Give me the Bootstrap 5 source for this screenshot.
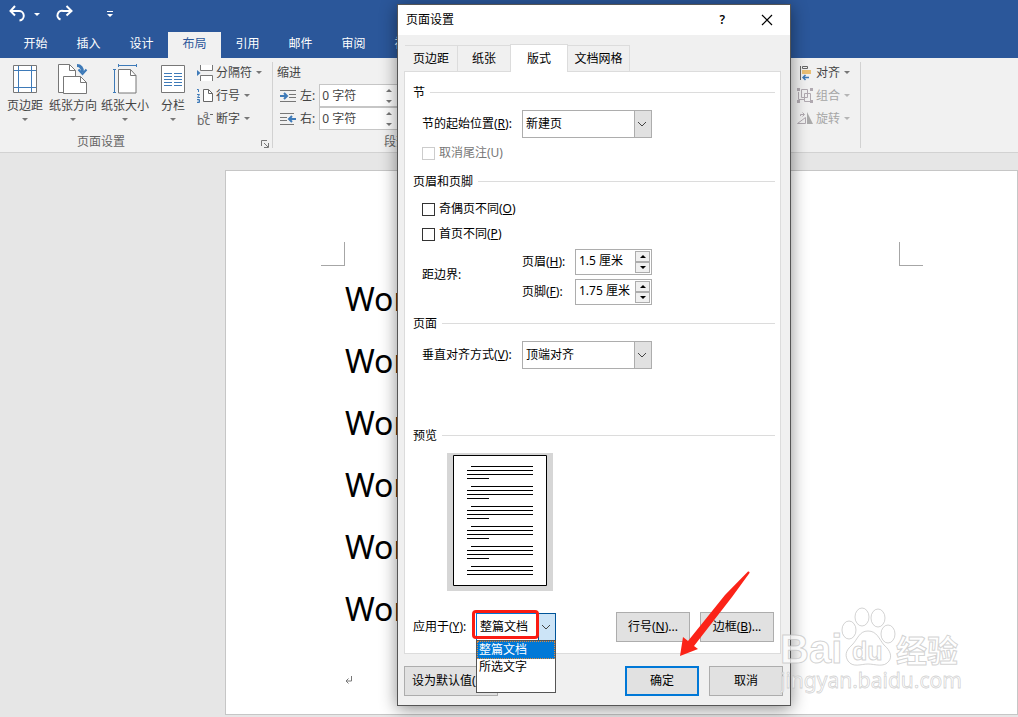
<!DOCTYPE html>
<html lang="zh-CN">
<head>
<meta charset="utf-8">
<meta name="viewport" content="width=device-width, initial-scale=1">
<title>页面设置</title>
<link href="https://cdn.jsdelivr.net/npm/bootstrap@5.3.0/dist/css/bootstrap.min.css" rel="stylesheet">
<style>
  :root { --word-blue: #2b579a; --ink: #444; --line: #d2d2d2; --face: #f0f0f0; --edge: #adadad; }
  body { font: 12px/16px "Noto Sans", "Noto Sans CJK SC", sans-serif; color: #000; background: #e6e6e6; }
  button, input, select { font: inherit; color: inherit; border-radius: 0; }
  svg { display: block; flex: none; }
  .plain-btn { border: 0; background: none; padding: 0; white-space: nowrap; }

  /* application window */
  .app-head { background: var(--word-blue); color: #fff; }
  .quick-bar { height: 32px; padding: 0 8px 4px; }
  .quick-bar .caret { border-top-color: #fff; }
  .menu-tabs { padding-left: 9px; height: 26px; }
  .menu-tabs a { width: 53px; line-height: 24px; text-align: center; color: #fff; text-decoration: none; }
  .menu-tabs a.current { background: #f1f1f1; color: var(--word-blue); }
  .ribbon { background: #f1f1f1; color: var(--ink); height: 95px; border-bottom: 1px solid var(--line); }
  .ribbon-group { padding: 3px 0 0; position: relative; }
  .group-setup::after, .group-arrange::after { content: ""; position: absolute; right: 0; top: 4px; bottom: 4px; width: 1px; background: var(--line); }
  .group-setup { width: 273px; padding-left: 1px; }
  .group-para { width: 520px; padding-left: 4px; }
  .group-arrange { width: 68px; padding-left: 4px; }
  .group-name { line-height: 24px; color: #666; }
  .setup-name { padding: 0 4px 0 76px; }
  .para-name { padding-left: 107px; }
  .tool-body { height: 69px; }
  .big-tool { width: 48px; padding-top: 3px; }
  .small-tool { height: 23px; gap: 3px; }
  .small-tool:disabled { color: #a6a6a6; }
  .caret { width: 0; height: 0; border: 3px solid transparent; border-top-color: #777; border-bottom: 0; }
  .small-tool .caret { margin-left: 1px; }
  .small-tool:disabled .caret { border-top-color: #b5b5b5; }
  .indent-row { height: 23px; padding-left: 3px; gap: 4px; }
  .indent-box { width: 80px; height: 23px; border: 1px solid #c6c6c6; background: #fff; }
  .indent-box input { width: 66px; border: 0; padding: 0 2px; background: none; }
  .indent-box .tri-up, .indent-box .tri-down { color: #777; }

  /* document */
  .paper { margin: 17px 0 2px 225px; background: #fff; border: 1px solid #c6c6c6; padding-top: 71px; }
  .crop-marks { padding: 0 94px 0 95px; }
  .crop-marks i { width: 24px; height: 24px; border-bottom: 1px solid #a6a6a6; }
  .crop-marks i:first-child { border-right: 1px solid #a6a6a6; }
  .crop-marks i:last-child { border-left: 1px solid #a6a6a6; }
  .doc-text { padding: 2px 119px 0; font-size: 32px; line-height: 62px; }
  .doc-text p { margin: 0; }
  .para-end { margin-top: 35px; }

  /* dialog window */
  .dialog-win { position: absolute; left: 397px; top: 4px; width: 394px; background: var(--face); border: 1px solid #555; box-shadow: 0 3px 16px rgba(0,0,0,.45); }
  .dialog-title { background: #fff; height: 30px; padding: 0 17px 0 8px; }
  .help-btn { font-weight: 600; margin-right: 36px; }
  .dialog-main { padding: 9px 7px 9px 6px; }
  .page-tabs { padding-left: 1px; }
  .page-tabs button { height: 26px; border: 1px solid #dcdcdc; border-bottom: 0; border-left: 0; background: var(--face); padding: 0; width: 53px; }
  .page-tabs button.current { height: 28px; margin-bottom: -1px; width: 58px; border-left: 1px solid #dcdcdc; margin-left: -1px; background: #fff; position: relative; }
  .page-tabs button.wide { width: 62px; }
  .sheet { background: #fff; border: 1px solid #dcdcdc; padding: 12px 5px 11px 8px; margin-right: 2px; }
  .legend-row { gap: 5px; height: 16px; margin-top: 10px; }
  .legend-row:first-child { margin-top: 0; }
  .legend-row::after { content: ""; flex: 1; height: 1px; background: #dcdcdc; }
  .legend-row h2 { font: inherit; line-height: 18px; margin: 0; padding-top: 2px; }
  .legend-row.after-tick { margin-top: 12px; }
  .legend-row.after-blank { margin-top: 58px; }
  .inset-row { padding-left: 9px; margin-top: 10px; }
  .inset-row.tight { margin-top: 7px; }
  .inset-row.first-tick { margin-top: 12px; }
  .inset-row.next-tick { margin-top: 9px; }
  .field-label { width: 100px; white-space: nowrap; }
  .short-label { width: 53px; white-space: nowrap; }
  .combo { position: relative; width: 130px; height: 28px; }
  .combo select { appearance: none; width: 100%; height: 100%; border: 1px solid var(--edge); background: #fff; padding: 0 3px; color: #000; }
  .combo .drop { position: absolute; right: 0; top: 0; width: 18px; height: 100%; border: 1px solid var(--edge); background: #e1e1e1; pointer-events: none; }
  .tick { gap: 4px; height: 16px; }
  .tick input { appearance: none; width: 13px; height: 13px; border: 1px solid #333; background: #fff; margin: 0; }
  .tick input:disabled { border-color: #ccc; }
  .tick.off { color: #777; }
  .spin { width: 77px; height: 26px; border: 1px solid var(--edge); background: #fff; padding: 1px; }
  .spin input { width: 58px; border: 0; padding: 0 2px 2px; }
  .spin button { width: 15px; height: 11px; border: 1px solid var(--edge); background: var(--face); padding: 0; }
  .tri-up, .tri-down { width: 0; height: 0; border: 3px solid transparent; }
  .tri-up { border-top: 0; border-bottom-color: currentColor; }
  .tri-down { border-bottom: 0; border-top-color: currentColor; }
  .preview-box { width: 106px; height: 138px; margin: 10px 0 21px 34px; background: #d6d6d6; padding: 2px 6px; }
  .push { width: 74px; height: 30px; border: 1px solid var(--edge); background: #e1e1e1; padding: 0; white-space: nowrap; }
  .push + .push { margin-left: 10px; }
  .push.primary { border: 2px solid #0078d7; }
  .push.default-set { width: 94px; overflow: hidden; text-align: left; padding-left: 7px; }
  .apply-label { width: 63px; }
  .apply-actions { padding-right: 1px; }
  .apply-combo { position: relative; width: 80px; height: 28px; }
  .apply-combo select { appearance: none; width: 100%; height: 100%; border: 1px solid #0078d7; background: #fff; padding: 0 3px; color: #000; }
  .apply-combo .drop { position: absolute; right: 0; top: 0; width: 18px; height: 100%; border: 1px solid #005499; background: #cce4f7; pointer-events: none; }
  .apply-list { position: absolute; z-index: 2; left: 0; top: 27px; width: 80px; height: 53px; border: 1px solid #555; background: #fff; padding: 0; margin: 0; list-style: none; }
  .apply-list li { line-height: 16px; padding-left: 2px; }
  .apply-list li.chosen { background: #0078d7; color: #fff; outline: 1px dotted #e08a3c; outline-offset: -1px; line-height: 18px; }
  .red-frame { position: absolute; z-index: 3; left: -4px; top: -3px; width: 67px; height: 29px; border: 3px solid #fb1b12; border-radius: 4px; }
  .red-arrow { position: absolute; z-index: 4; left: 281px; top: 565px; }
  .dialog-foot { margin-top: 12px; }
  .watermark { position: absolute; z-index: 5; right: 48px; bottom: 19px; pointer-events: none; }
</style>
</head>
<body class="position-relative min-vh-100 d-flex flex-column overflow-hidden">
<header class="app-head">
  <div class="quick-bar d-flex align-items-center">
    <button class="plain-btn" aria-label="撤消"><svg width="18" height="18" viewBox="0 0 18 18" fill="none" stroke="#fff" stroke-width="2"><path d="M3 6h7.500a4 4 0 0 1 1 9.500"/><path d="M7 1 2.500 6 7 10.500"/></svg></button>
    <span class="caret ms-2"></span>
    <button class="plain-btn ms-3" aria-label="恢复"><svg width="18" height="18" viewBox="0 0 18 18" fill="none" stroke="#fff" stroke-width="2"><path d="M15 6H7.500a4.500 4.500 0 0 0-3 8.500"/><path d="M10.500 1 15.500 6l-5 4.500"/></svg></button>
    <button class="plain-btn ms-4 ps-2" aria-label="自定义快速访问工具栏"><svg width="8" height="8" viewBox="0 0 8 8" fill="#fff"><path d="M1 1h6v1H1zM1 4h6L4 7z"/></svg></button>
  </div>
  <nav class="menu-tabs d-flex">
    <a href="#">开始</a><a href="#">插入</a><a href="#">设计</a><a href="#" class="current">布局</a><a href="#">引用</a><a href="#">邮件</a><a href="#">审阅</a><a href="#">视图</a>
  </nav>
</header>

<section class="ribbon d-flex">
  <div class="ribbon-group group-setup">
    <div class="tool-body d-flex">
      <button class="plain-btn big-tool d-flex flex-column align-items-center">
        <svg width="24" height="30" viewBox="0 0 24 30" fill="none"><path d="M.5 1.500h23v27H.5z" fill="#fff" stroke="#777"/><path d="M5.500 2v26M18.500 2v26M1 6.500h22M1 23.500h22" stroke="#3e7ab8"/></svg>
        <span class="mt-1">页边距</span><span class="caret mt-1"></span>
      </button>
      <button class="plain-btn big-tool d-flex flex-column align-items-center">
        <svg width="30" height="30" viewBox="0 0 30 30" fill="none"><path d="M5.500 28.500H.5v-28h11l6 6v6" fill="#fff" stroke="#777"/><path d="M11.500.5v6h6" stroke="#777"/><path d="M5.500 12.500h17l6 6v11h-23z" fill="#fff" stroke="#777"/><path d="M22.500 12.500v6h6" stroke="#777"/><path d="M19 1.500c4 0 5.500 2.500 5.500 7" stroke="#3e7ab8" stroke-width="3"/><path d="M20.500 5.500 24.500 10l4-4.500" stroke="#3e7ab8" stroke-width="2"/></svg>
        <span class="mt-1">纸张方向</span><span class="caret mt-1"></span>
      </button>
      <button class="plain-btn big-tool d-flex flex-column align-items-center ms-1">
        <svg width="24" height="30" viewBox="0 0 24 30" fill="none"><path d="M5.500 5.500h12l5.500 6v17.500H5.500z" fill="#fff" stroke="#777"/><path d="M17.500 5.500v6H23" stroke="#777"/><path d="M5 1.500h19M5.500 0v3M23.500 0v3M1.500 5v24M0 5.500h3M0 28.500h3" stroke="#3e7ab8"/></svg>
        <span class="mt-1">纸张大小</span><span class="caret mt-1"></span>
      </button>
      <button class="plain-btn big-tool d-flex flex-column align-items-center">
        <svg width="24" height="30" viewBox="0 0 24 30" fill="none"><path d="M.5 1.500h23v27H.5z" fill="#fff" stroke="#777"/><path d="M3 9.500h8M3 12.500h8M3 15.500h8M3 18.500h8M3 21.500h8M13 9.500h8M13 12.500h8M13 15.500h8M13 18.500h8M13 21.500h8" stroke="#3e7ab8"/></svg>
        <span class="mt-1">分栏</span><span class="caret mt-1"></span>
      </button>
      <div class="d-flex flex-column align-items-start">
        <button class="plain-btn small-tool d-flex align-items-center"><svg width="16" height="16" viewBox="0 0 16 16" fill="none"><path d="M3.500 0v5.500h12V0M3.500 16v-5.500h12V16" fill="#fff" stroke="#777"/><path d="M0 5v6l3.500-3z" fill="#3e7ab8"/></svg>分隔符<span class="caret"></span></button>
        <button class="plain-btn small-tool d-flex align-items-center"><svg width="16" height="16" viewBox="0 0 16 16" fill="none"><path d="M6.500 1.500h5l4 4v8h-9z" fill="#fff" stroke="#666"/><path d="M11.500 1.500v4h4" stroke="#666"/><path d="M0 1.500h1.500V4M0 6.500h2.500L.5 9.500H3M0 11.500h2.500v3H0M.5 13h2" stroke="#3e7ab8"/></svg>行号<span class="caret"></span></button>
        <button class="plain-btn small-tool d-flex align-items-center"><svg width="16" height="22" viewBox="0 0 16 22" fill="#666" font-family="Noto Sans" font-size="12"><text x="0" y="17">bc</text><text x="6" y="10" font-size="10">a</text><path d="M13 6h3v1h-3z"/></svg>断字<span class="caret"></span></button>
      </div>
    </div>
    <div class="group-name setup-name d-flex align-items-center justify-content-between"><span>页面设置</span>
      <button class="plain-btn mt-1" aria-label="页面设置选项"><svg width="8" height="8" viewBox="0 0 8 8" fill="none" stroke="#777"><path d="M.5 6V.5H6M3 3l4 4M7.500 3v4.500H3"/></svg></button></div>
  </div>
  <div class="ribbon-group group-para">
    <div class="tool-body">
      <div class="small-tool d-flex align-items-center">缩进</div>
      <div class="indent-row d-flex align-items-center">
        <svg width="16" height="14" viewBox="0 0 16 14" fill="none"><path d="M0 1.500h16M9 5.500h7M9 8.500h7M0 12.500h16" stroke="#777"/><path d="M0 7h6M4 4l3 3-3 3" stroke="#3e7ab8" stroke-width="2"/></svg>
        <label for="indentL">左:</label>
        <div class="indent-box d-flex align-items-center"><input id="indentL" value="0 字符"><span class="d-flex flex-column gap-2"><i class="tri-up"></i><i class="tri-down"></i></span></div>
      </div>
      <div class="indent-row d-flex align-items-center">
        <svg width="16" height="14" viewBox="0 0 16 14" fill="none"><path d="M0 1.500h14M0 5.500h7M0 8.500h7M0 12.500h14" stroke="#777"/><path d="M16 7h-6M12 4 9 7l3 3" stroke="#3e7ab8" stroke-width="2"/></svg>
        <label for="indentR">右:</label>
        <div class="indent-box d-flex align-items-center"><input id="indentR" value="0 字符"><span class="d-flex flex-column gap-2"><i class="tri-up"></i><i class="tri-down"></i></span></div>
      </div>
    </div>
    <div class="group-name para-name">段落</div>
  </div>
  <div class="ribbon-group group-arrange">
    <button class="plain-btn small-tool d-flex align-items-center"><svg width="16" height="16" viewBox="0 0 16 16" fill="none"><path d="M3.500 1v14M5.500 1.500h5v2h-5z" stroke="#666"/><path d="M5 5h9v4H5z" fill="#eabf74"/><path d="M12 12.500H6M8.500 10 6 12.500 8.500 15" stroke="#3e7ab8" stroke-width="1.500"/></svg>对齐<span class="caret"></span></button>
    <button class="plain-btn small-tool d-flex align-items-center" disabled><svg width="16" height="16" viewBox="0 0 16 16" fill="none" stroke="#b0a9b0"><path d="M4.500 1.500h6v8h-6zM7.500 5.500h6v8h-6zM1.500 4v7.500h6"/><path d="M0 0h3v3H0zM13 0h3v3h-3zM0 12h3v3H0zM13 12h3v3h-3z" fill="#b0a9b0" stroke="none"/></svg>组合<span class="caret"></span></button>
    <button class="plain-btn small-tool d-flex align-items-center" disabled><svg width="16" height="16" viewBox="0 0 16 16" fill="none" stroke="#b0a9b0"><path d="M.5 12.500h8v-6zM3.500 5V3.500H7M5.500 1.500l2 2-2 2"/><path d="M10 1v12h6z" fill="#aaa" stroke="none"/></svg>旋转<span class="caret"></span></button>
  </div>
</section>

<main class="flex-grow-1 d-flex flex-column">
  <article class="paper flex-grow-1">
    <div class="crop-marks d-flex justify-content-between"><i></i><i></i></div>
    <div class="doc-text"><p>Word</p><p>Word</p><p>Word</p><p>Word</p><p>Word</p><p>Word</p>
      <svg class="para-end" width="8" height="10" viewBox="0 0 8 10" fill="none" stroke="#777"><path d="M6.500 1v5H1M3.500 3.500 1 6l2.500 2.500"/></svg></div>
  </article>
</main>

<div class="dialog-win" role="dialog" aria-label="页面设置">
  <div class="dialog-title d-flex align-items-center">
    <span class="me-auto">页面设置</span>
    <button class="plain-btn help-btn" aria-label="帮助">?</button>
    <button class="plain-btn" aria-label="关闭"><svg width="12" height="12" viewBox="0 0 12 12" fill="none" stroke="#000" stroke-width="1.200"><path d="m1 1 10 10M11 1 1 11"/></svg></button>
  </div>
  <div class="dialog-main">
    <div class="page-tabs d-flex align-items-end">
      <button>页边距</button><button>纸张</button><button class="current">版式</button><button class="wide">文档网格</button>
    </div>
    <div class="sheet">
      <div class="legend-row d-flex align-items-center"><h2>节</h2></div>
      <div class="inset-row d-flex align-items-center">
        <label class="field-label" for="secStart">节的起始位置(<u>R</u>):</label>
        <div class="combo"><select id="secStart"><option>新建页</option></select><span class="drop d-flex align-items-center justify-content-center"><svg width="10" height="6" viewBox="0 0 10 6" fill="none" stroke="#444"><path d="m0 1 4 4 4-4"/></svg></span></div>
      </div>
      <div class="inset-row tight"><label class="tick off d-flex align-items-center"><input type="checkbox" disabled>取消尾注(U)</label></div>
      <div class="legend-row after-tick d-flex align-items-center"><h2>页眉和页脚</h2></div>
      <div class="inset-row first-tick"><label class="tick d-flex align-items-center"><input type="checkbox"><span>奇偶页不同(<u>O</u>)</span></label></div>
      <div class="inset-row next-tick"><label class="tick d-flex align-items-center"><input type="checkbox"><span>首页不同(<u>P</u>)</span></label></div>
      <div class="inset-row tight d-flex align-items-center">
        <span class="field-label pb-1">距边界:</span>
        <div class="d-flex flex-column gap-1">
          <div class="d-flex align-items-center"><label class="short-label" for="headD">页眉(<u>H</u>):</label>
            <div class="spin d-flex justify-content-between"><input id="headD" value="1.5 厘米"><span class="d-flex flex-column"><button class="d-flex align-items-center justify-content-center" aria-label="增大页眉"><i class="tri-up"></i></button><button class="d-flex align-items-center justify-content-center" aria-label="减小页眉"><i class="tri-down"></i></button></span></div></div>
          <div class="d-flex align-items-center"><label class="short-label" for="footD">页脚(<u>F</u>):</label>
            <div class="spin d-flex justify-content-between"><input id="footD" value="1.75 厘米"><span class="d-flex flex-column"><button class="d-flex align-items-center justify-content-center" aria-label="增大页脚"><i class="tri-up"></i></button><button class="d-flex align-items-center justify-content-center" aria-label="减小页脚"><i class="tri-down"></i></button></span></div></div>
        </div>
      </div>
      <div class="legend-row d-flex align-items-center"><h2>页面</h2></div>
      <div class="inset-row d-flex align-items-center">
        <label class="field-label" for="vAlign">垂直对齐方式(<u>V</u>):</label>
        <div class="combo"><select id="vAlign"><option>顶端对齐</option></select><span class="drop d-flex align-items-center justify-content-center"><svg width="10" height="6" viewBox="0 0 10 6" fill="none" stroke="#444"><path d="m0 1 4 4 4-4"/></svg></span></div>
      </div>
      <div class="legend-row after-blank d-flex align-items-center"><h2>预览</h2></div>
      <div class="preview-box">
        <svg width="94" height="131" viewBox="0 0 94 131" fill="none" stroke="#000"><path d="M.5.5h93v130H.5z" fill="#fff"/>
          <path d="M18 11.500h62M14 15.500h66M14 19.500h66M14 23.500h22M18 31.500h62M14 35.500h66M14 39.500h66M14 43.500h22M18 51.500h62M14 55.500h66M14 59.500h66M14 63.500h22M18 71.500h62M14 75.500h66M14 79.500h66M14 83.500h22M18 91.500h62M14 95.500h66M14 99.500h66M14 103.500h22M18 111.500h62M14 115.500h66M14 119.500h66"/></svg>
      </div>
      <div class="d-flex align-items-center">
        <label for="applyTo" class="apply-label">应用于(<u>Y</u>):</label>
        <div class="apply-combo me-auto">
          <select id="applyTo"><option>整篇文档</option><option>所选文字</option></select>
          <span class="drop d-flex align-items-center justify-content-center"><svg width="10" height="6" viewBox="0 0 10 6" fill="none" stroke="#444"><path d="m0 1 4 4 4-4"/></svg></span>
          <ul class="apply-list"><li class="chosen">整篇文档</li><li>所选文字</li></ul>
          <span class="red-frame"></span>
        </div>
        <div class="apply-actions d-flex"><button class="push">行号(<u>N</u>)...</button><button class="push">边框(<u>B</u>)...</button></div>
      </div>
    </div>
    <div class="dialog-foot d-flex">
      <button class="push default-set me-auto">设为默认值(<u>D</u>)</button>
      <button class="push primary">确定</button>
      <button class="push">取消</button>
    </div>
  </div>
  <svg class="red-arrow" width="72" height="90" viewBox="0 0 72 90" fill="#fb2318"><path d="M69 1.500Q71 1 70.500 3L53 27 15 76l4 3L1 86 4 67l5 4L46 25z"/></svg>
</div>

<svg class="watermark" width="190" height="98" viewBox="0 0 190 98" fill="#fff" fill-opacity=".7" stroke="#bbb" stroke-opacity=".65" stroke-width="1" aria-hidden="true">
  <text x="0" y="63" font-family="Liberation Sans" font-weight="bold" font-size="40">Bai</text>
  <ellipse cx="69" cy="30" rx="7" ry="9"/><ellipse cx="82" cy="17" rx="7" ry="9"/><ellipse cx="98" cy="18" rx="7" ry="9"/><ellipse cx="108" cy="34" rx="7" ry="9"/>
  <path d="M88 31c9 0 11 8 16 14 7 6 8 12 5 16-5 7-14 3-21 3s-15 4-20-3c-3-5-3-10 4-16 6-6 7-14 16-14z"/>
  <text x="72" y="60" font-family="Liberation Sans" font-weight="bold" font-size="25">du</text>
  <text x="116" y="62" font-family="Noto Sans CJK SC" font-weight="bold" font-size="31">经验</text>
  <text x="0" y="88" font-family="Noto Sans" font-size="21" stroke-width=".8">jingyan.baidu.com</text>
</svg>
<script src="https://cdn.jsdelivr.net/npm/bootstrap@5.3.0/dist/js/bootstrap.bundle.min.js"></script>
</body>
</html>
